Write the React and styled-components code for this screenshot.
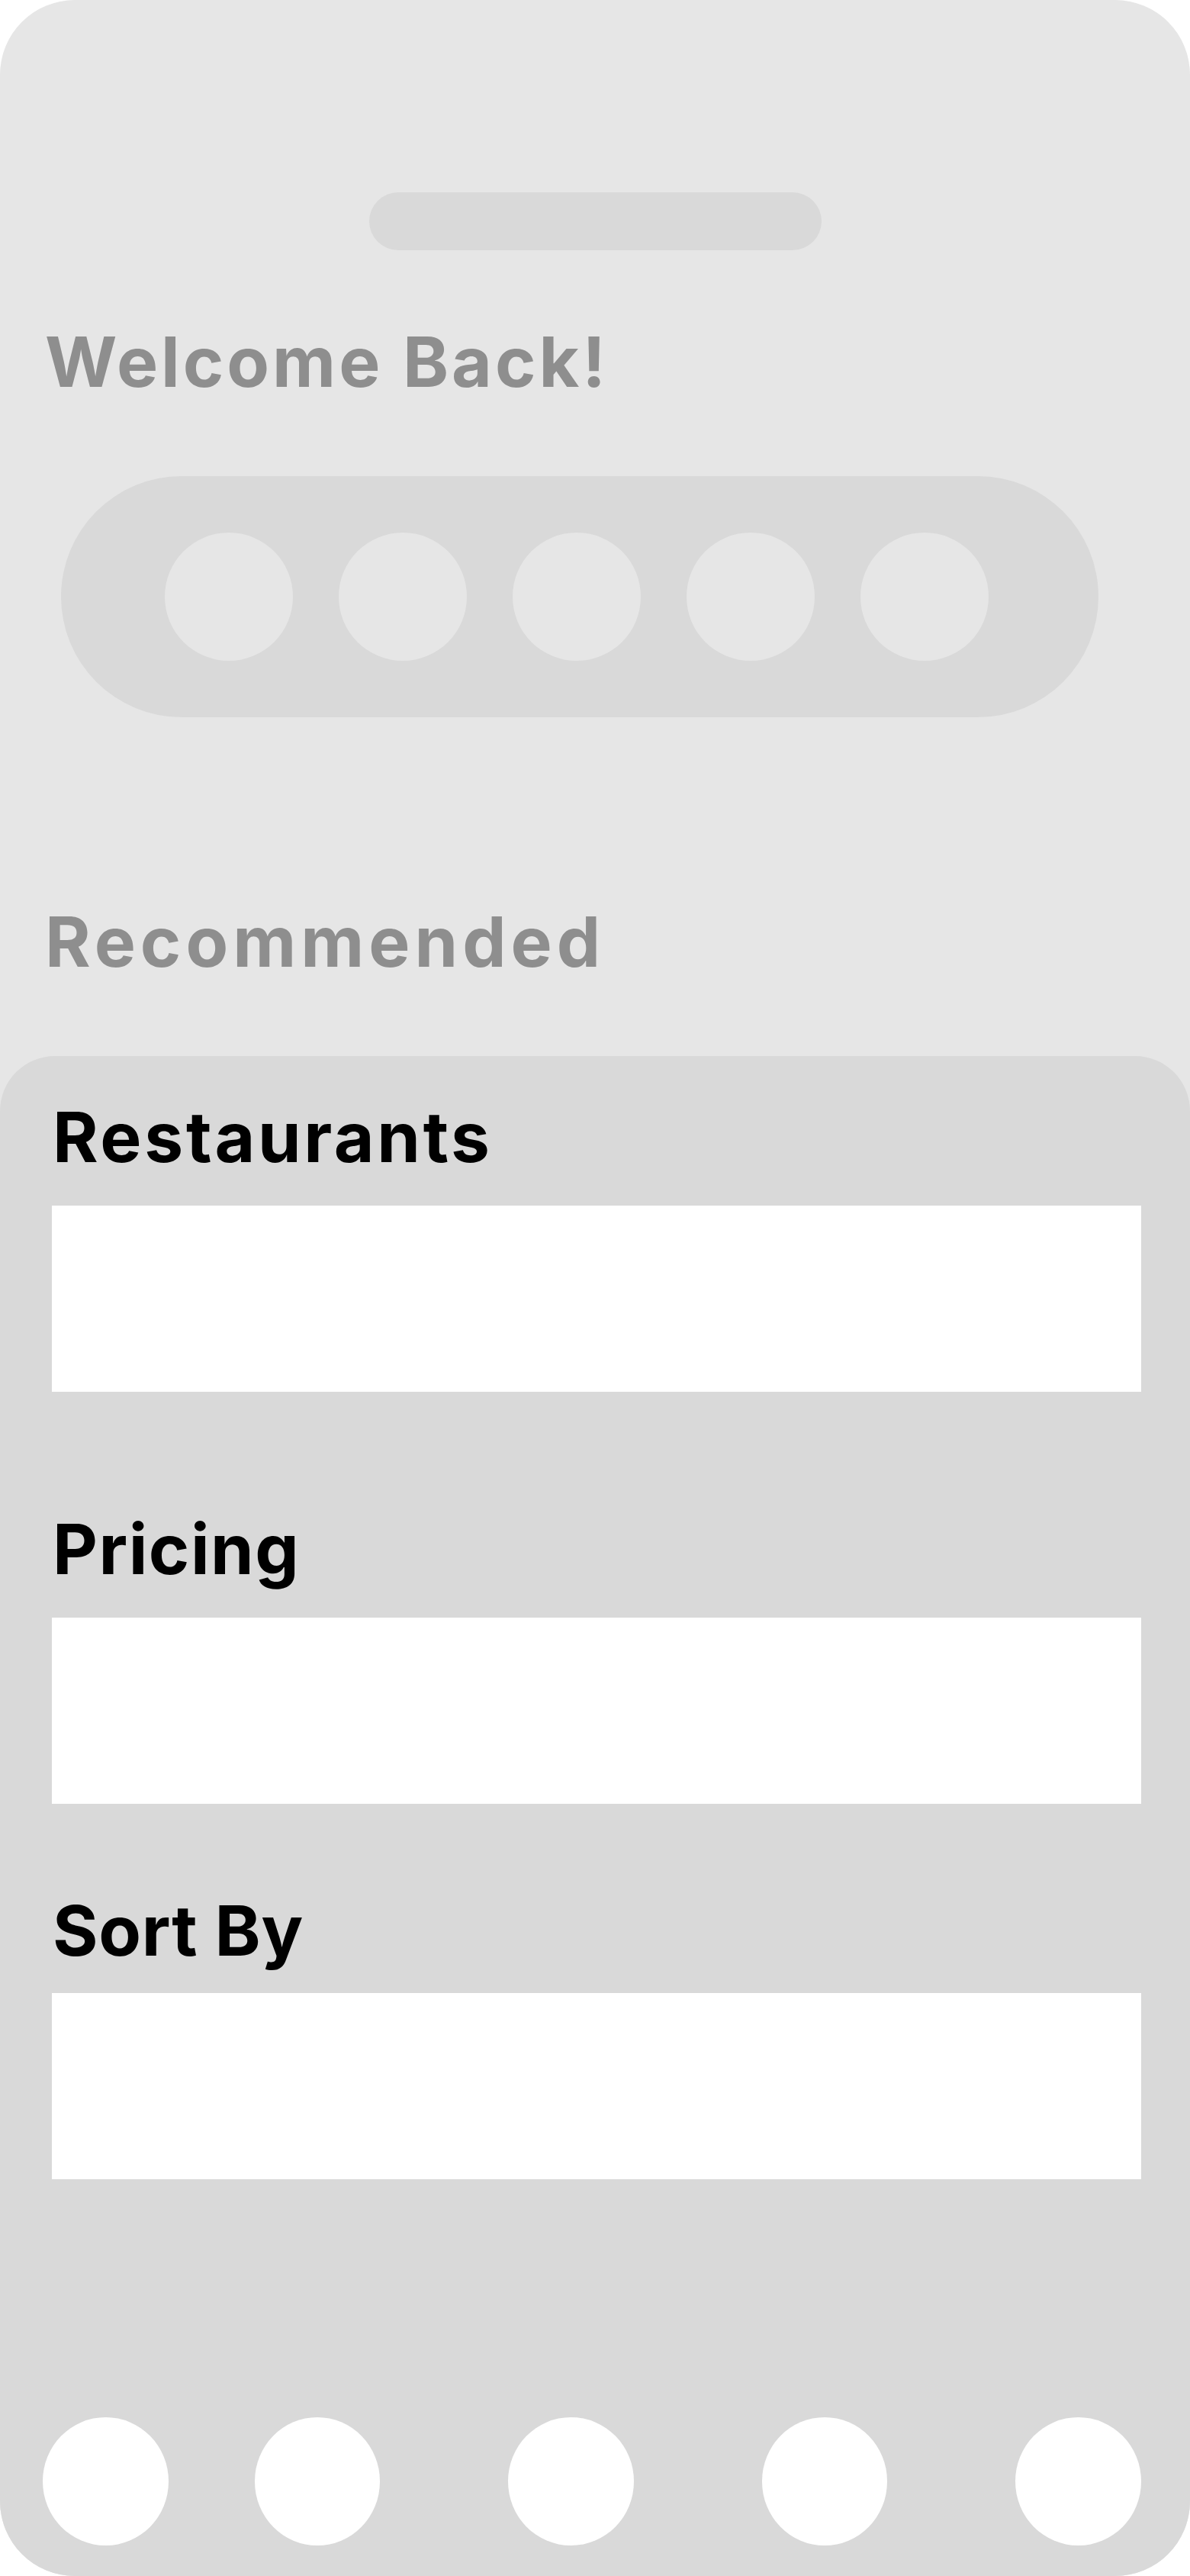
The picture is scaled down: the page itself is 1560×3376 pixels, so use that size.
import styled, { createGlobalStyle } from "styled-components";

const GlobalStyle = createGlobalStyle`
  * { box-sizing: border-box; }
  body {
    margin: 0;
    background: #ffffff;
    font-family: Inter, "Liberation Sans", sans-serif;
  }
`;

const tabs = [1, 2, 3, 4, 5];
const navItems = [1, 2, 3, 4, 5];

const filters = [
  { label: "Restaurants", top: 61, gap: 44, spacing: 3.7 },
  { label: "Pricing", top: 161, gap: 44, spacing: 1.5 },
  { label: "Sort By", top: 121, gap: 36, spacing: 0.7 },
];

const App = () => {
  return (
    <>
      <GlobalStyle />
      <Phone>
        <Handle />
        <Heading $top={101} $spacing={4}>
          Welcome Back!
        </Heading>
        <TabBar>
          {tabs.map((t) => (
            <Tab key={t} />
          ))}
        </TabBar>
        <Heading $top={249} $spacing={6}>
          Recommended
        </Heading>
        <Panel>
          {filters.map((f) => (
            <Filter key={f.label} $top={f.top}>
              <Label $spacing={f.spacing}>{f.label}</Label>
              <Field $gap={f.gap} />
            </Filter>
          ))}
          <Nav>
            {navItems.map((n) => (
              <NavDot key={n} />
            ))}
          </Nav>
        </Panel>
      </Phone>
    </>
  );
};
export default App;

const Phone = styled.div`
  width: 1560px;
  min-height: 3376px;
  background-color: #e6e6e6;
  border-radius: 98px;
  overflow: hidden;
  display: flex;
  flex-direction: column;
  padding-top: 252px;
`;

const Handle = styled.div`
  width: 593px;
  height: 76px;
  margin: 0 auto;
  border-radius: 38px;
  background-color: #d9d9d9;
`;

const Heading = styled.h1`
  margin: ${(p) => p.$top}px 0 0 59px;
  font-size: 91px;
  line-height: 1;
  font-weight: 700;
  color: #8e8e8e;
  letter-spacing: ${(p) => p.$spacing}px;
`;

const TabBar = styled.div`
  margin: 104px 0 0 80px;
  width: 1360px;
  height: 316px;
  border-radius: 158px;
  background-color: #d9d9d9;
  display: flex;
  align-items: center;
  justify-content: center;
  gap: 60px;
  padding-right: 8px;
`;

const Tab = styled.div`
  width: 168px;
  height: 168px;
  border-radius: 50%;
  background-color: #e6e6e6;
`;

const Panel = styled.div`
  margin-top: 104px;
  flex: 1;
  background-color: #d9d9d9;
  border-radius: 72px 72px 0 0;
  display: flex;
  flex-direction: column;
  padding: 0 64px 40px 68px;
`;

const Filter = styled.div`
  margin-top: ${(p) => p.$top}px;
  display: flex;
  flex-direction: column;
`;

const Label = styled.h2`
  margin: 0 0 0 1px;
  font-size: 91px;
  line-height: 1;
  font-weight: 700;
  color: #000000;
  letter-spacing: ${(p) => p.$spacing}px;
`;

const Field = styled.div`
  margin-top: ${(p) => p.$gap}px;
  height: 244px;
  background-color: #ffffff;
`;

const Nav = styled.div`
  margin: auto 0 0 -12px;
  display: flex;
  gap: 168px;

  & > :first-child {
    margin-right: -55px;
  }
`;

const NavDot = styled.div`
  width: 168px;
  height: 168px;
  border-radius: 50%;
  background-color: #ffffff;
`;
